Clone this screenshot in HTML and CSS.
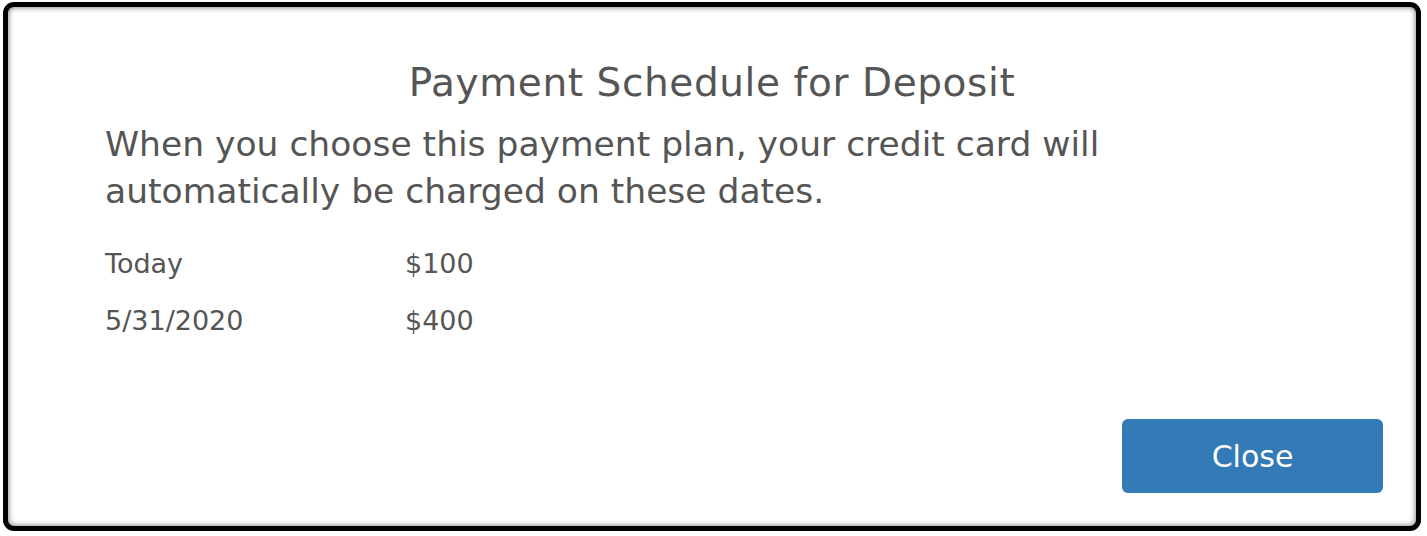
FILE: index.html
```html
<!DOCTYPE html>
<html>
<head>
<meta charset="utf-8">
<link rel="stylesheet" href="styles.css">
</head>
<body>
<div class="modal">
  <h1 class="title">Payment Schedule for Deposit</h1>
  <div class="body">
    <p class="intro">When you choose this payment plan, your credit card will<br>automatically be charged on these dates.</p>
    <div class="schedule">
      <div class="row"><span class="date">Today</span><span class="amount">$100</span></div>
      <div class="row"><span class="date">5/31/2020</span><span class="amount">$400</span></div>
    </div>
  </div>
  <div class="footer">
    <button class="close-btn">Close</button>
  </div>
</div>
</body>
</html>
```
FILE: styles.css
```css
html, body {
  margin: 0;
  padding: 0;
  background: #fff;
}
body {
  padding: 2px 6px 5px 3px;
  font-family: "DejaVu Sans", "Open Sans", sans-serif;
  color: #555;
}
.modal {
  box-sizing: border-box;
  height: 529px;
  border: 5px solid #000;
  border-radius: 11px;
  box-shadow: inset 0 0 5px 1px rgba(0,0,0,0.45);
  display: flex;
  flex-direction: column;
  background: #fff;
}
.title {
  margin: 52px 0 0 0;
  text-align: center;
  font-weight: normal;
  font-size: 39px;
  letter-spacing: 0.6px;
  line-height: 48px;
  color: #555;
}
.body {
  padding-left: 97px;
}
.intro {
  margin: 14px 0 0 0;
  font-size: 34.5px;
  line-height: 47px;
  color: #555;
}
.schedule {
  margin-top: 20px;
  display: flex;
  flex-direction: column;
}
.row {
  display: flex;
  font-size: 27px;
  line-height: 57px;
}
.date {
  width: 300px;
}
.footer {
  margin-top: auto;
  display: flex;
  justify-content: flex-end;
  padding: 0 33px 33px 0;
}
.close-btn {
  width: 261px;
  height: 74px;
  border: none;
  border-radius: 6px;
  background: #337ab7;
  color: #fff;
  font-family: inherit;
  font-size: 30px;
  padding: 0;
}
```
